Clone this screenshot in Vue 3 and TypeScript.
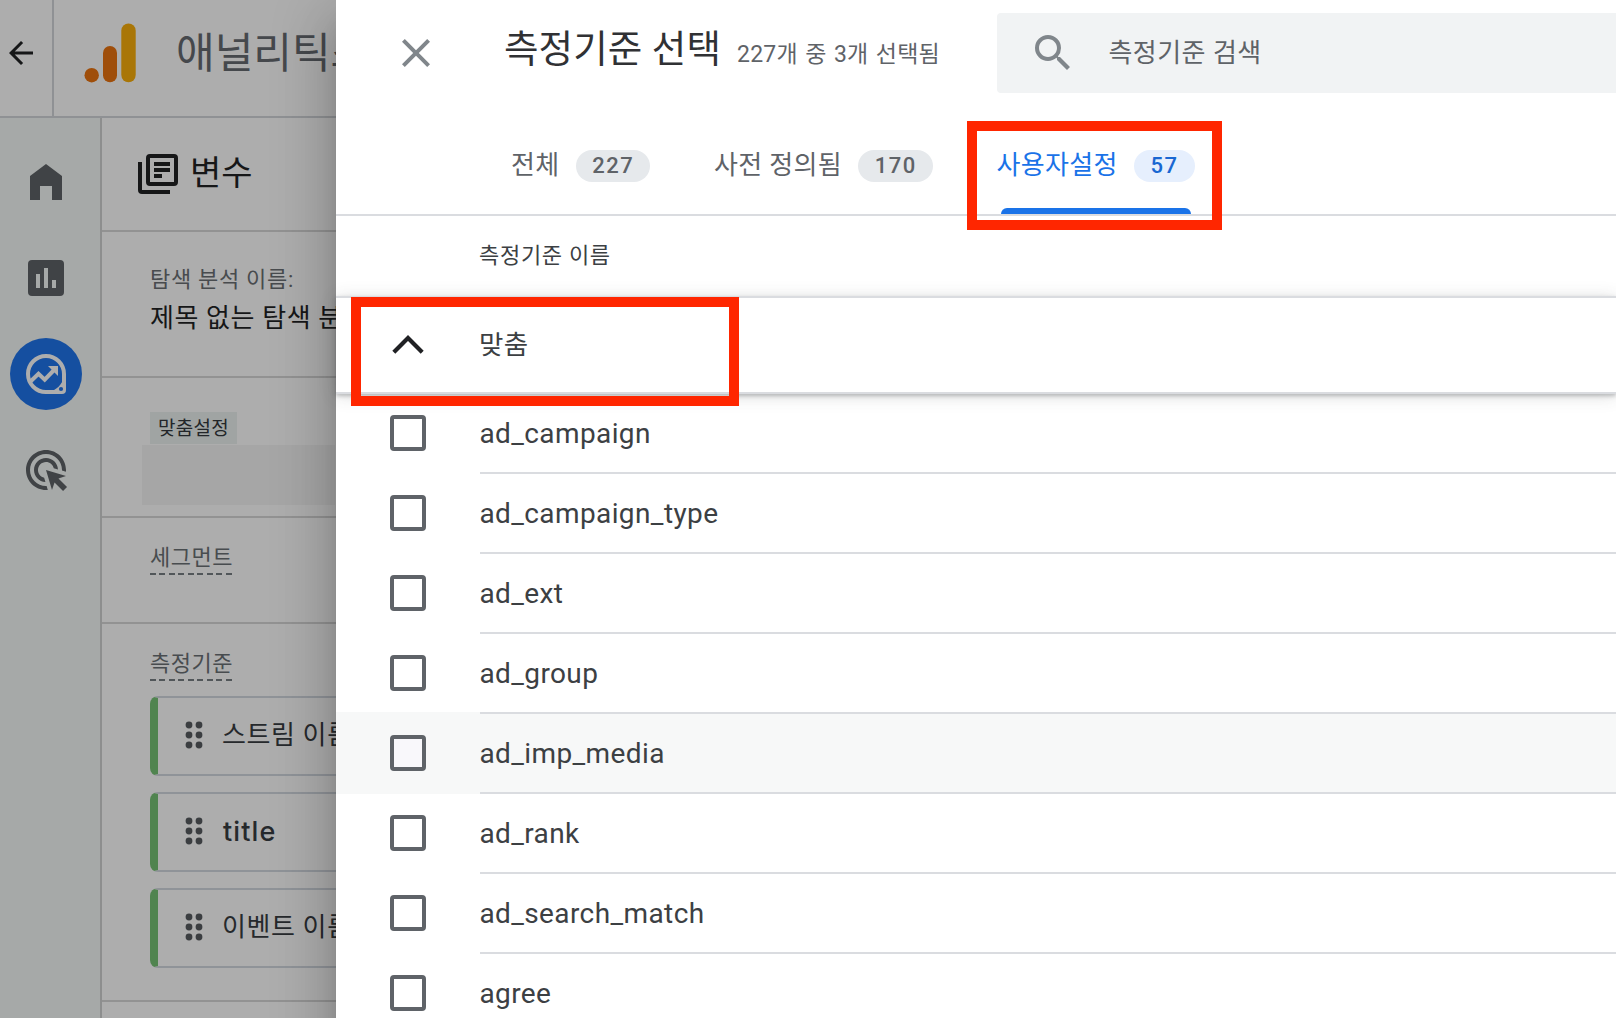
<script setup lang="ts">
interface Tab {
  label: string
  count: number
  active?: boolean
}

interface Dimension {
  name: string
  hovered?: boolean
}

const tabs: Tab[] = [
  { label: '전체', count: 227 },
  { label: '사전 정의됨', count: 170 },
  { label: '사용자설정', count: 57, active: true },
]

const dimensions: Dimension[] = [
  { name: 'ad_campaign' },
  { name: 'ad_campaign_type' },
  { name: 'ad_ext' },
  { name: 'ad_group' },
  { name: 'ad_imp_media', hovered: true },
  { name: 'ad_rank' },
  { name: 'ad_search_match' },
  { name: 'agree' },
]

const selected: string[] = ['스트림 이름', 'title', '이벤트 이름']
const dots: number[] = [4, 14, 24]
</script>

<template>
  <div class="screen">
    <div class="backdrop">
      <header class="topbar">
        <div class="back">
          <svg width="36" height="36" viewBox="0 0 24 24" fill="#161718">
            <path d="M20 11H7.83l5.59-5.59L12 4l-8 8 8 8 1.41-1.41L7.83 13H20v-2z" />
          </svg>
        </div>
        <svg class="logo" width="54" height="60" viewBox="0 0 54 60">
          <circle cx="7.7" cy="52.2" r="7.2" fill="#9f4e0a" />
          <rect x="19" y="23" width="14" height="36.3" rx="7" fill="#9f4e0a" />
          <rect x="37.3" y="0.5" width="14.4" height="58.8" rx="7.2" fill="#a97607" />
        </svg>
        <span class="product">애널리틱스</span>
      </header>

      <div class="body">
        <nav class="rail">
          <svg class="rail-home" width="32" height="36" viewBox="0 0 32 36" fill="#404346">
            <path d="M16 0 32 12V36H22V22H10V36H0V12z" />
          </svg>
          <svg class="rail-chart" width="36" height="36" viewBox="0 0 36 36">
            <rect width="36" height="36" rx="4" fill="#404346" />
            <path d="M8 14h4v14H8zM16 8h4v20h-4zM24 20h4v8h-4z" fill="#a6a9a8" />
          </svg>
          <span class="rail-active">
            <svg width="40" height="40" viewBox="0 0 40 40">
              <path
                d="M20 2a18 18 0 0 0 0 36h16a2 2 0 0 0 2-2V20A18 18 0 0 0 20 2z"
                fill="none"
                stroke="#adadad"
                stroke-width="4"
              />
              <path d="M38 22v16H22C30 37 37 30 38 22z" fill="#adadad" />
              <circle cx="35" cy="35" r="2.1" fill="#154fa0" />
              <path d="M4.5 27.5 12.5 19.8l6.2 5.8L29 15" fill="none" stroke="#adadad" stroke-width="4" />
              <path d="M22 12h10v10z" fill="#adadad" />
            </svg>
          </span>
          <svg class="rail-ads" width="48" height="48" viewBox="0 0 24 24" fill="#404346">
            <path
              d="M11.71 17.99C8.53 17.84 6 15.22 6 12c0-3.31 2.69-6 6-6 3.22 0 5.84 2.53 5.99 5.71l-2.1-.63C15.48 9.31 13.89 8 12 8c-2.21 0-4 1.79-4 4 0 1.89 1.31 3.48 3.08 3.89l.63 2.1zM22 12c0 .3-.01.6-.04.9l-1.97-.59c.01-.1.01-.21.01-.31 0-4.42-3.58-8-8-8s-8 3.58-8 8 3.58 8 8 8c.1 0 .21 0 .31-.01l.59 1.97c-.3.03-.6.04-.9.04-5.52 0-10-4.48-10-10S6.48 2 12 2s10 4.48 10 10zm-3.77 4.26L22 15l-10-3 3 10 1.26-3.77 4.27 4.27 1.98-1.98-4.28-4.26z"
            />
          </svg>
        </nav>

        <aside class="variables">
          <div class="section heading">
            <svg width="40" height="40" viewBox="0 0 40 40" fill="none" stroke="#161718" stroke-width="4">
              <rect x="10" y="2" width="28" height="28" rx="2" />
              <path d="M2 8v28a2 2 0 0 0 2 2h28M16 10h16M16 16h16M16 22h8" />
            </svg>
            <span>변수</span>
          </div>
          <div class="section name">
            <div class="caption">탐색 분석 이름:</div>
            <div class="value">제목 없는 탐색 분석</div>
          </div>
          <div class="section range">
            <span class="chip">맞춤설정</span>
            <div class="masked"></div>
          </div>
          <div class="section segment">
            <span class="dashed">세그먼트</span>
          </div>
          <div class="section dims">
            <span class="dashed">측정기준</span>
            <div v-for="item in selected" :key="item" class="pill">
              <svg width="18" height="28" viewBox="0 0 18 28" fill="#3b3e41">
                <template v-for="y in dots" :key="y">
                  <circle cx="4" :cy="y" r="3.4" />
                  <circle cx="14" :cy="y" r="3.4" />
                </template>
              </svg>
              <span :class="{ latin: item === 'title' }">{{ item }}</span>
            </div>
          </div>
        </aside>
      </div>
    </div>

    <main class="panel">
      <header class="panel-head">
        <svg class="close" width="48" height="48" viewBox="0 0 24 24" fill="#80868b">
          <path d="M19 6.41 17.59 5 12 10.59 6.41 5 5 6.41 10.59 12 5 17.59 6.41 19 12 13.41 17.59 19 19 17.59 13.41 12z" />
        </svg>
        <div class="title">
          <h1>측정기준 선택</h1>
          <span>227개 중 3개 선택됨</span>
        </div>
        <div class="search">
          <svg width="48" height="48" viewBox="0 0 24 24" fill="#80868b">
            <path
              d="M15.5 14h-.79l-.28-.27A6.471 6.471 0 0 0 16 9.5 6.5 6.5 0 1 0 9.5 16c1.61 0 3.09-.59 4.23-1.57l.27.28v.79l5 4.99L20.49 19l-4.99-5zm-6 0C7.01 14 5 11.99 5 9.5S7.01 5 9.5 5 14 7.01 14 9.5 11.99 14 9.5 14z"
            />
          </svg>
          <span>측정기준 검색</span>
        </div>
      </header>

      <nav class="tabs">
        <div v-for="tab in tabs" :key="tab.label" class="tab" :class="{ active: tab.active }">
          <span class="tab-label">{{ tab.label }}</span>
          <span class="count">{{ tab.count }}</span>
        </div>
      </nav>

      <div class="column-head">측정기준 이름</div>

      <div class="group">
        <svg width="32" height="20" viewBox="0 0 32 20">
          <path d="M1.8 17.2 16 3l14.2 14.2" fill="none" stroke="#202124" stroke-width="4.2" />
        </svg>
        <span>맞춤</span>
      </div>

      <div v-for="d in dimensions" :key="d.name" class="row" :class="{ hovered: d.hovered }">
        <span class="check"><i class="box"></i></span>
        <span class="label">{{ d.name }}</span>
      </div>
    </main>

    <div class="mark mark-tab"></div>
    <div class="mark mark-group"></div>
  </div>
</template>

<style>
html,
body {
  margin: 0;
  overflow: hidden;
}
</style>

<style scoped>
.screen {
  position: relative;
  display: flex;
  width: 1616px;
  height: 1018px;
  overflow: hidden;
  background: #adadad;
  font-family: Roboto, 'Noto Sans CJK KR', sans-serif;
  color: #3c4043;
  white-space: nowrap;
}
.screen * {
  box-sizing: border-box;
}
svg {
  display: block;
  flex: none;
}

/* Dimmed application behind the panel */
.backdrop {
  flex: none;
  width: 336px;
  height: 1018px;
  overflow: hidden;
}
.topbar {
  display: flex;
  height: 118px;
  border-bottom: 2px solid #8f9194;
}
.back {
  flex: none;
  width: 54px;
  padding: 35px 0 0 3px;
  border-right: 2px solid #8f9194;
}
.logo {
  margin: 23px 0 0 30px;
}
.product {
  margin: 24px 0 0 38px;
  font-size: 42px;
  line-height: 60px;
  color: #45484c;
}
.body {
  display: flex;
  height: 900px;
}
.rail {
  flex: none;
  display: flex;
  flex-direction: column;
  width: 102px;
  border-right: 2px solid #8d8e8e;
  background: #a6a9a8;
}
.rail-home {
  margin: 46px 0 0 30px;
}
.rail-chart {
  margin: 60px 0 0 28px;
}
.rail-active {
  width: 72px;
  height: 72px;
  margin: 42px 0 0 10px;
  padding: 16px;
  border-radius: 50%;
  background: #154fa0;
}
.rail-ads {
  margin: 36px 0 0 22px;
}
.variables {
  flex: none;
  width: 500px;
}
.section {
  padding-left: 48px;
  border-bottom: 2px solid #929292;
}
.heading {
  display: flex;
  height: 114px;
  padding: 36px 0 0 36px;
  font-size: 34px;
  line-height: 40px;
  color: #161718;
}
.heading span {
  margin: -1px 0 0 12px;
}
.name {
  height: 146px;
  padding-top: 32px;
  letter-spacing: 0.6px;
}
.caption {
  font-size: 22px;
  line-height: 32px;
  letter-spacing: 0.7px;
  color: #484b4e;
}
.value {
  margin-top: 3px;
  font-size: 26px;
  line-height: 38px;
  color: #161718;
}
.range {
  height: 140px;
  padding-top: 34px;
}
.chip {
  display: block;
  width: 87px;
  height: 32px;
  padding-left: 8px;
  background: #a0a4a3;
  font-size: 19px;
  line-height: 34px;
  letter-spacing: 0.3px;
  color: #232629;
}
.masked {
  width: 193px;
  height: 60px;
  margin: 1px 0 0 -8px;
  background: #a6a6a6;
}
.segment {
  height: 106px;
  padding-top: 25px;
}
.dashed {
  display: block;
  width: 82px;
  height: 32px;
  font-size: 22px;
  line-height: 29px;
  letter-spacing: 0.5px;
  color: #484c4f;
  background: repeating-linear-gradient(90deg, #515659 0 6px, transparent 6px 9.5px) 0 100% / 100% 2px no-repeat;
}
.dims {
  height: 378px;
  padding-top: 25px;
}
.pill {
  display: flex;
  align-items: center;
  height: 80px;
  margin-top: 16px;
  padding: 0 0 2px 27px;
  border: 2px solid #8f9398;
  border-left: 8px solid #50844f;
  border-radius: 8px;
  font-size: 26px;
  line-height: 36px;
  letter-spacing: 0.6px;
  color: #26292c;
}
.pill span {
  margin-left: 19px;
}
.pill .latin {
  margin: 2px 0 0 20px;
  font-family: Inter, Roboto, sans-serif;
  font-size: 27px;
  font-weight: 500;
  letter-spacing: 1.1px;
}
.dashed + .pill {
  margin-top: 15px;
}

/* Dimension picker */
.panel {
  position: relative;
  flex: none;
  width: 1280px;
  height: 1200px;
  background: #fff;
  box-shadow:
    0 16px 20px -10px rgba(0, 0, 0, 0.2),
    0 32px 48px 4px rgba(0, 0, 0, 0.14),
    0 12px 60px 10px rgba(0, 0, 0, 0.12);
}
.panel-head {
  display: flex;
  height: 118px;
}
.close {
  margin: 29px 0 0 55.5px;
}
.title {
  display: flex;
  flex: none;
  align-items: baseline;
  width: 493px;
  height: 48px;
  margin: 25px 0 0 64.5px;
}
h1 {
  margin: 0;
  font-size: 37.5px;
  font-weight: 400;
  line-height: 48px;
  letter-spacing: 0.1px;
  color: #303134;
}
.title span {
  margin: 1px 0 0 16px;
  align-self: flex-start;
  font-size: 23px;
  line-height: 58px;
  letter-spacing: 0.2px;
  word-spacing: 1.5px;
  color: #5f6368;
}
.search {
  display: flex;
  flex: 1;
  height: 80px;
  margin-top: 13px;
  padding: 16px 0 0 31.5px;
  border-radius: 4px 0 0 4px;
  background: #f1f3f4;
  font-size: 26px;
  line-height: 48px;
  letter-spacing: 0.45px;
  color: #5f6368;
}
.search span {
  margin-left: 32px;
}
.tabs {
  display: flex;
  gap: 64px;
  height: 98px;
  padding-left: 175px;
  border-bottom: 2px solid #dadce0;
}
.tab {
  position: relative;
  display: flex;
  align-items: center;
  height: 96px;
  font-size: 26px;
  letter-spacing: 0.3px;
  color: #5f6368;
}
.tab-label {
  line-height: 36px;
  margin-bottom: 2px;
}
.count {
  height: 32px;
  margin-left: 16.3px;
  padding: 0 15.8px 0 16.5px;
  border-radius: 16px;
  background: #e6e9ec;
  font-size: 22px;
  font-weight: 500;
  line-height: 32px;
  letter-spacing: 1.5px;
}
.active {
  color: #1a73e8;
}
.active .count {
  padding-right: 16.4px;
  background: #e6effd;
  color: #1967d2;
}
.active::after {
  content: '';
  position: absolute;
  right: 4px;
  bottom: 0;
  left: 4px;
  height: 6px;
  border-radius: 6px 6px 0 0;
  background: #1a73e8;
}
.column-head {
  height: 80px;
  padding-left: 143px;
  font-size: 22px;
  line-height: 79px;
  letter-spacing: 0.7px;
}
.group {
  position: relative;
  display: flex;
  align-items: center;
  height: 98px;
  padding-left: 56px;
  border: solid #dadce0;
  border-width: 2px 0;
  background: #fff;
  box-shadow:
    0 2px 4px rgba(60, 64, 67, 0.3),
    0 2px 16px rgba(60, 64, 67, 0.18);
  font-size: 26.5px;
  line-height: 40px;
}
.group span {
  margin: 0 0 1px 55px;
  letter-spacing: 0.4px;
}
.row {
  display: flex;
  height: 80px;
}
.check {
  flex: none;
  display: flex;
  align-items: center;
  width: 144px;
  padding: 2px 0 0 54px;
}
.box {
  width: 36px;
  height: 36px;
  border: 4px solid #5f6368;
  border-radius: 4px;
}
.label {
  flex: 1;
  border-top: 2px solid #dadce0;
  font-size: 28px;
  line-height: 80px;
  letter-spacing: 0.4px;
  text-indent: -0.6px;
}
.group + .row {
  height: 78px;
}
.group + .row .check {
  padding-top: 0;
}
.group + .row .label {
  border-top: 0;
}
.hovered {
  background: #f7f8f8;
  box-shadow: 0 2px 0 #f7f8f8;
}
.hovered .box {
  background: #f9f8fb;
}

/* Highlight frames */
.mark {
  position: absolute;
  border: 10px solid #ff2600;
}
.mark-tab {
  top: 121px;
  left: 967px;
  width: 255px;
  height: 109px;
}
.mark-group {
  top: 297px;
  left: 351px;
  width: 388px;
  height: 109px;
}
</style>
